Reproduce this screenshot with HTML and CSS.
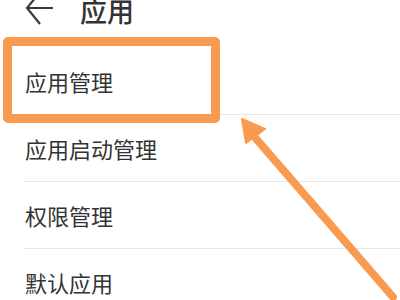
FILE: index.html
```html
<!DOCTYPE html>
<html>
<head>
    <meta charset="utf-8">
    <link rel="stylesheet" href="styles.css">
</head>
<body>
    <div class="screen">
        <div class="header">
            <svg class="back" width="30" height="34" viewBox="0 0 30 34">
                <path d="M16 -4 L3 12 L16 28 M3 12 L29 12" fill="none" stroke="#3a3a3a" stroke-width="2.2"/>
            </svg>
            <h1>应用</h1>
        </div>

        <ul class="menu">
            <li>应用管理</li>
            <li>应用启动管理</li>
            <li>权限管理</li>
            <li>默认应用</li>
        </ul>

        <div class="highlight"></div>

        <svg class="pointer" width="400" height="300" viewBox="0 0 400 300">
            <line x1="393" y1="297" x2="252" y2="134" stroke="#f89a50" stroke-width="8" stroke-linecap="round"/>
            <polygon points="242,119 265,129 246,143" fill="#f89a50" stroke="#f89a50" stroke-width="2" stroke-linejoin="round"/>
        </svg>
    </div>
</body>
</html>
```

FILE: styles.css
```css
body {
    margin: 0;
    background: #fff;
    color: #333;
    font-family: "Noto Sans CJK SC", "Noto Sans", sans-serif;
}

.screen {
    position: relative;
    width: 400px;
    height: 300px;
    overflow: hidden;
}

.header {
    height: 48px;
    display: flex;
    align-items: flex-start;
    padding-left: 24px;
}

.header .back {
    margin-top: -4px;
}

.header h1 {
    margin: -3px 0 0 26px;
    font-size: 27px;
    line-height: 27px;
    font-weight: 500;
    color: #333;
}

.menu {
    list-style: none;
    margin: 0 0 0 24px;
    padding: 0;
}

.menu li {
    height: 66px;
    line-height: 66px;
    font-size: 22px;
    padding-left: 1px;
    border-bottom: 1px solid #e6e6e6;
}

/* annotations drawn over the screenshot */
.highlight {
    position: absolute;
    left: 3px;
    top: 37px;
    width: 199px;
    height: 68px;
    border: 9px solid #f89a50;
    border-radius: 5px;
}

.pointer {
    position: absolute;
    left: 0;
    top: 0;
}
```
